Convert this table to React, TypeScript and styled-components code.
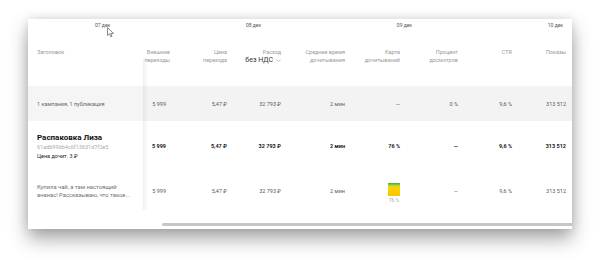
import React from "react";
import styled, { createGlobalStyle } from "styled-components";

const Global = createGlobalStyle`
  html, body { margin: 0; padding: 0; background: #fff; }
  body { font-family: Roboto, "Noto Sans", "Liberation Sans", sans-serif; }
`;

const Page = styled.div`
  width: 600px;
  height: 265px;
  box-sizing: border-box;
  padding: 19px 28px 0 28px;
  position: relative;
`;

const Card = styled.div`
  width: 544px;
  height: 210px;
  background: #fff;
  box-shadow: 0 10px 18px rgba(0, 0, 0, 0.34), 0 0 10px rgba(0, 0, 0, 0.12);
  display: flex;
  flex-direction: column;
  overflow: hidden;
  position: relative;
`;

const DateRow = styled.div`
  height: 12px;
  display: flex;
  justify-content: space-between;
  align-items: center;
  padding: 0 9px 0 67px;
`;

const DateLabel = styled.span`
  font-size: 5px;
  color: #555;
  white-space: nowrap;
`;

const Row = styled.div<{ $h: number; $bg?: string; $align?: string }>`
  display: flex;
  height: ${(p) => p.$h}px;
  background: ${(p) => p.$bg || "#fff"};
  align-items: ${(p) => p.$align || "center"};
`;

const FirstCell = styled.div<{ $bg?: string }>`
  width: 115px;
  flex: none;
  align-self: stretch;
  box-sizing: border-box;
  padding-left: 9px;
  display: flex;
  flex-direction: column;
  justify-content: center;
  background: ${(p) => p.$bg || "#fff"};
  position: relative;
  &::after {
    content: "";
    position: absolute;
    top: 0;
    bottom: 0;
    right: -5px;
    width: 5px;
    background: linear-gradient(to right, rgba(0, 0, 0, 0.06), rgba(0, 0, 0, 0));
  }
`;

const HeaderFirst = styled(FirstCell)`
  justify-content: flex-start;
  padding-top: 17px;
  &::after {
    top: 27px;
  }
`;

const HeadCell = styled.div<{ $w: number }>`
  width: ${(p) => p.$w}px;
  flex: none;
  box-sizing: border-box;
  padding-top: 17px;
  padding-right: 2px;
  text-align: right;
  align-self: stretch;
  white-space: nowrap;
`;

const HeadText = styled.div`
  font-size: 5.5px;
  line-height: 8px;
  color: #9a9a9a;
`;

const VatSelect = styled.div`
  font-size: 7px;
  line-height: 9px;
  color: #333;
  display: flex;
  justify-content: flex-end;
  align-items: center;
  gap: 3px;
`;

const Cell = styled.div<{ $w: number; $pr?: number; $bold?: boolean; $color?: string }>`
  width: ${(p) => p.$w}px;
  flex: none;
  box-sizing: border-box;
  padding-right: ${(p) => p.$pr ?? 2}px;
  text-align: right;
  font-size: 5.5px;
  line-height: 8px;
  white-space: nowrap;
  font-weight: ${(p) => (p.$bold ? 700 : 400)};
  color: ${(p) => p.$color || "#5a5a5a"};
  display: flex;
  flex-direction: column;
  align-items: flex-end;
`;

const SummaryText = styled.div`
  font-size: 5.5px;
  color: #666;
  line-height: 8px;
`;

const Title = styled.div`
  font-size: 8px;
  line-height: 10px;
  font-weight: 700;
  color: #111;
`;

const Hash = styled.div`
  font-size: 5.5px;
  line-height: 9px;
  color: #aaa;
`;

const Price = styled.div`
  font-size: 5.5px;
  line-height: 8px;
  color: #222;
`;

const Desc = styled.div`
  font-size: 5.8px;
  line-height: 8px;
  color: #707070;
  width: 100px;
`;

const HeatBlock = styled.div`
  display: flex;
  flex-direction: column;
  align-items: center;
  gap: 1px;
  margin-top: 5px;
`;

const Heat = styled.div`
  width: 12px;
  height: 13px;
  background: linear-gradient(
    to bottom,
    #38b24a 0%,
    #6fc13c 10%,
    #cfd622 22%,
    #ffd300 36%,
    #fbc300 100%
  );
`;

const HeatLabel = styled.div`
  font-size: 5px;
  color: #aaa;
  line-height: 6px;
`;

const ScrollArea = styled.div`
  flex: 1;
  display: flex;
  align-items: flex-start;
  padding-top: 13px;
  padding-left: 134px;
`;

const Thumb = styled.div`
  flex: 1;
  height: 3px;
  background: #c6c6c6;
  border-radius: 2px 0 0 2px;
`;

const Cursor = styled.svg`
  position: absolute;
  left: 107px;
  top: 27px;
`;

const widths = [29, 57, 54, 64, 55, 58, 54, 54];

const headers: React.ReactNode[] = [
  <>
    <HeadText>Внешние</HeadText>
    <HeadText>переходы</HeadText>
  </>,
  <>
    <HeadText>Цена</HeadText>
    <HeadText>перехода</HeadText>
  </>,
  <>
    <HeadText>Расход</HeadText>
    <VatSelect>
      без НДС
      <svg width="5" height="3" viewBox="0 0 5 3">
        <path d="M0.4 0.4 L2.5 2.5 L4.6 0.4" fill="none" stroke="#999" strokeWidth="0.6" />
      </svg>
    </VatSelect>
  </>,
  <>
    <HeadText>Среднее время</HeadText>
    <HeadText>дочитывания</HeadText>
  </>,
  <>
    <HeadText>Карта</HeadText>
    <HeadText>дочитываний</HeadText>
  </>,
  <>
    <HeadText>Процент</HeadText>
    <HeadText>досмотров</HeadText>
  </>,
  <HeadText>CTR</HeadText>,
  <HeadText>Показы</HeadText>,
];

const summary = ["5 999", "5,47 ₽", "32 793 ₽", "2 мин", "—", "0 %", "9,6 %", "313 512"];
const item = ["5 999", "5,47 ₽", "32 793 ₽", "2 мин", "76 %", "—", "9,6 %", "313 512"];
const item2 = ["5 999", "5,47 ₽", "32 793 ₽", "2 мин", null, "—", "9,6 %", "313 512"];

export default function App() {
  return (
    <>
      <Global />
      <Page>
        <Card>
          <DateRow>
            <DateLabel>07 дек</DateLabel>
            <DateLabel>08 дек</DateLabel>
            <DateLabel>09 дек</DateLabel>
            <DateLabel>10 дек</DateLabel>
          </DateRow>
          <Row $h={55} $align="flex-start">
            <HeaderFirst>
              <HeadText>Заголовок</HeadText>
            </HeaderFirst>
            {headers.map((h, i) => (
              <HeadCell key={i} $w={widths[i]}>
                {h}
              </HeadCell>
            ))}
          </Row>
          <Row $h={35} $bg="#f3f3f3">
            <FirstCell $bg="#f5f5f5">
              <SummaryText>1 кампания, 1 публикация</SummaryText>
            </FirstCell>
            {summary.map((v, i) => (
              <Cell key={i} $w={widths[i]} $pr={i === 0 ? 6 : 2}>
                {v}
              </Cell>
            ))}
          </Row>
          <Row $h={50}>
            <FirstCell>
              <Title>Распаковка Лиза</Title>
              <Hash>61adb99db4c6f13631d7f2e5</Hash>
              <Price>Цена дочит. 3 ₽</Price>
            </FirstCell>
            {item.map((v, i) => (
              <Cell key={i} $w={widths[i]} $pr={i === 0 ? 6 : 2} $bold $color="#1a1a1a">
                {v}
              </Cell>
            ))}
          </Row>
          <Row $h={39}>
            <FirstCell>
              <Desc>Купила чай, а там настоящий ананас! Рассказываю, что такое...</Desc>
            </FirstCell>
            {item2.map((v, i) => (
              <Cell key={i} $w={widths[i]} $pr={i === 0 ? 6 : 2}>
                {v === null ? (
                  <HeatBlock>
                    <Heat />
                    <HeatLabel>76 %</HeatLabel>
                  </HeatBlock>
                ) : (
                  v
                )}
              </Cell>
            ))}
          </Row>
          <ScrollArea>
            <Thumb />
          </ScrollArea>
        </Card>
        <Cursor width="8" height="11" viewBox="0 0 8 11">
          <path d="M0.5 0.5 L0.5 8.5 L2.5 6.8 L3.8 9.8 L5 9.3 L3.8 6.4 L6.5 6.4 Z" fill="#fff" stroke="#555" strokeWidth="0.7" strokeLinejoin="round" />
        </Cursor>
      </Page>
    </>
  );
}
